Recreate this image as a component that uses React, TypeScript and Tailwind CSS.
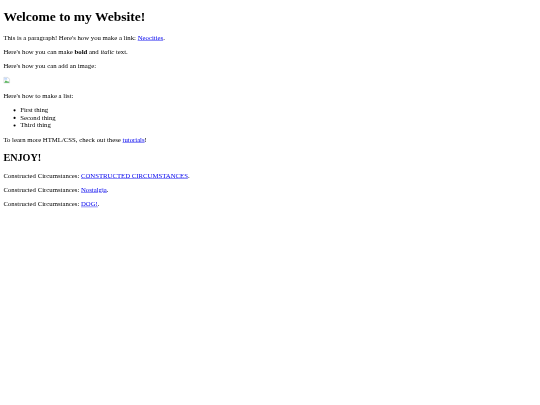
const linkCls = 'text-[#0000ee] underline'

function BrokenImage() {
  return (
    <svg width="16" height="16" viewBox="0 0 16 16" className="inline-block align-baseline">
      <path d="M1 1h9l5 5v9H1z" fill="#fff" stroke="#b0b4b8" strokeWidth="1.2" />
      <path d="M2 14l4-6 3 4 2-2 3 4z" fill="#4caf50" />
      <path d="M2 2h7v5H2z" fill="#c3d9fb" />
    </svg>
  )
}

// the page is a 1280 wide layout photographed at 540
export default function App() {
  return (
    <div className="h-[405px] w-[540px] overflow-hidden bg-white">
      <div className="w-[1280px] origin-top-left scale-[0.421875] px-2 py-px blur-[0.5px] font-['Liberation_Serif',serif] text-base leading-[normal] text-black">
        <h1 className="mt-[20.44px] mb-[21.44px] text-[32px] leading-[normal] font-bold">Welcome to my Website!</h1>
        <p className="my-4">This is a paragraph! Here's how you make a link: <a className={linkCls}>Neocities</a>.</p>
        <p className="my-4">Here's how you can make <b>bold</b> and <i>italic</i> text.</p>
        <p className="my-4">Here's how you can add an image:</p>
        <p className="my-4"><BrokenImage /></p>
        <p className="my-4">Here's how to make a list:</p>
        <ul className="my-4 list-disc pl-10">
          <li>First thing</li>
          <li>Second thing</li>
          <li>Third thing</li>
        </ul>
        <p className="my-4">To learn more HTML/CSS, check out these <a className={linkCls}>tutorials</a>!</p>
        <h2 className="my-[19.92px] text-2xl leading-[normal] font-bold">ENJOY!</h2>
        <p className="my-4">Constructed Circumstances: <a className={linkCls}>CONSTRUCTED CIRCUMSTANCES</a>.</p>
        <p className="my-4">Constructed Circumstances: <a className={linkCls}>Nostalgia</a>.</p>
        <p className="my-4">Constructed Circumstances: <a className={linkCls}>DOG!</a>.</p>
      </div>
    </div>
  )
}
